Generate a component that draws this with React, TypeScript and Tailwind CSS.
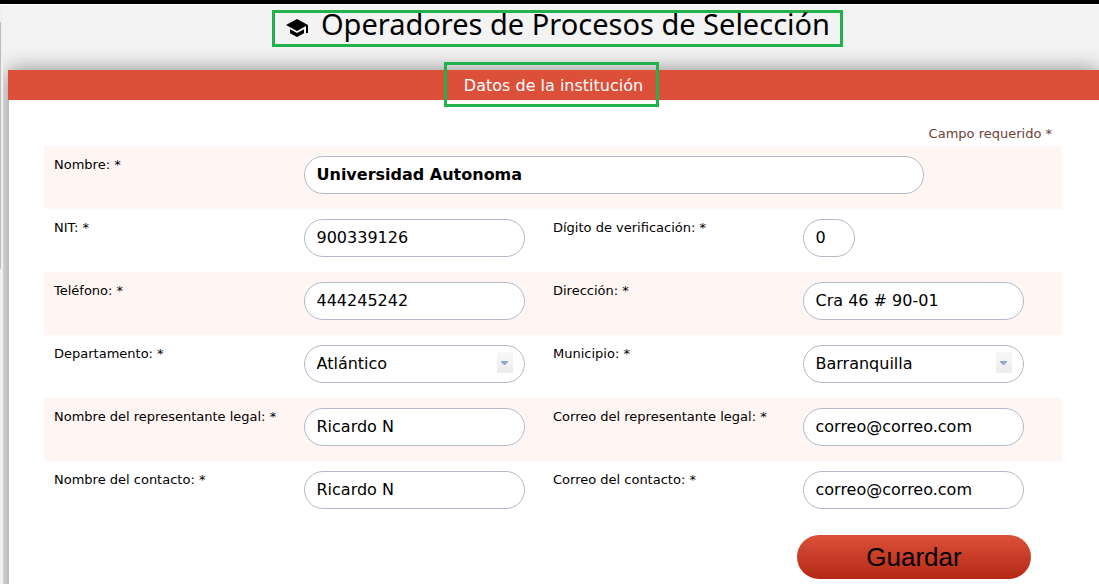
import { ReactNode } from 'react';
import { MdSchool } from 'react-icons/md';

const controlClass =
  'block h-[38px] rounded-full border border-[#b4b9c8] bg-white px-3 text-base text-black outline-none';

interface IFieldProps {
  id: string;
  label: string;
  value: string;
  options?: string[];
  size?: 'small' | 'wide';
}

function Label({ id, children }: { id: string; children: ReactNode }) {
  return (
    <label htmlFor={id} className="text-[13px] leading-[18px]">
      {children} *
    </label>
  );
}

function Field({ id, label, value, options, size }: IFieldProps) {
  if (options) {
    return (
      <>
        <Label id={id}>{label}</Label>
        <div className="relative w-[221px]">
          <select id={id} defaultValue={value} className={`${controlClass} w-full appearance-none`}>
            {options.map((option) => (
              <option key={option}>{option}</option>
            ))}
          </select>
          <span className="pointer-events-none absolute right-3 top-[7px] flex h-[21px] w-4 items-center justify-center bg-linear-to-b from-[#f8f8f8] to-[#ececec]">
            <svg width="7" height="4" viewBox="0 0 7 4" fill="#90a8d0">
              <path d="M0 0h7v1L4 4H3L0 1z" />
            </svg>
          </span>
        </div>
      </>
    );
  }

  if (size === 'wide') {
    return (
      <>
        <Label id={id}>{label}</Label>
        <div className="col-span-3">
          <input
            id={id}
            type="text"
            defaultValue={value}
            className={`${controlClass} w-[620px] max-w-full pb-0.5 font-bold`}
          />
        </div>
      </>
    );
  }

  return (
    <>
      <Label id={id}>{label}</Label>
      <input
        id={id}
        type="text"
        defaultValue={value}
        className={`${controlClass} pb-0.5 ${size === 'small' ? 'w-[52px]' : 'w-[221px]'}`}
      />
    </>
  );
}

const rows: IFieldProps[][] = [
  [{ id: 'nombre', label: 'Nombre:', value: 'Universidad Autonoma', size: 'wide' }],
  [
    { id: 'nit', label: 'NIT:', value: '900339126' },
    { id: 'digito', label: 'Dígito de verificación:', value: '0', size: 'small' },
  ],
  [
    { id: 'telefono', label: 'Teléfono:', value: '444245242' },
    { id: 'direccion', label: 'Dirección:', value: 'Cra 46 # 90-01' },
  ],
  [
    { id: 'departamento', label: 'Departamento:', value: 'Atlántico', options: ['Atlántico', 'Bolívar', 'Magdalena'] },
    { id: 'municipio', label: 'Municipio:', value: 'Barranquilla', options: ['Barranquilla', 'Soledad', 'Malambo'] },
  ],
  [
    { id: 'representante', label: 'Nombre del representante legal:', value: 'Ricardo N' },
    { id: 'correo-representante', label: 'Correo del representante legal:', value: 'correo@correo.com' },
  ],
  [
    { id: 'contacto', label: 'Nombre del contacto:', value: 'Ricardo N' },
    { id: 'correo-contacto', label: 'Correo del contacto:', value: 'correo@correo.com' },
  ],
];

export default function App() {
  return (
    <div className="flex min-h-screen flex-col border-t-4 border-black bg-[#f3f3f3] font-['DejaVu_Sans',sans-serif] text-black">
      <div className="h-px bg-white" />
      <div className="flex grow">
        <div className="w-[3px] bg-[#f0f0f0] pt-[17px]">
          <div className="h-[247px] w-px bg-[#bdbdbd]" />
        </div>

        <main className="flex grow flex-col overflow-hidden pl-[5px] pt-[5px]">
          <div className="flex justify-center pl-2">
            <h1 className="flex h-[37px] items-center gap-3 border-[3px] border-[#22b14c] px-2.5 font-['Noto_Sans',sans-serif] text-[29px] leading-none">
              <MdSchool size={24} className="mb-0.5" />
              <span className="-mt-2.5">Operadores de Procesos de Selección</span>
            </h1>
          </div>

          <form
            className="-mb-10 mt-[23px] flex grow flex-col bg-[#bbb] shadow-[0_0_20px_#888]"
            onSubmit={(e) => e.preventDefault()}
          >
            <div className="flex h-[30px] items-center justify-center bg-[#dc5039] pb-0.5 pr-1">
              <h2 className="z-10 flex h-[45px] shrink-0 items-center border-[3px] border-[#22b14c] pl-[17px] pr-[13px] pt-1 text-base text-white">
                Datos de la institución
              </h2>
            </div>

            <div className="ml-px grow bg-white pl-[35px] pr-[37px] pt-[26px]">
              <p className="mb-1 pr-2.5 text-right text-[13px] leading-4 text-[#6d4038]">Campo requerido *</p>
              {rows.map((row) => (
                <div key={row[0].id} className="grid h-[63px] grid-cols-4 px-2.5 pt-2.5 odd:bg-white even:bg-[#fff6f4]">
                  {row.map((field) => (
                    <Field key={field.id} {...field} />
                  ))}
                </div>
              ))}
              <div className="flex justify-end pr-[31px] pt-[11px]">
                <button
                  type="submit"
                  className="h-11 w-[234px] rounded-full bg-linear-to-b from-[#dc5039] to-[#b42814] font-['Liberation_Sans',sans-serif] text-[26px] leading-none"
                >
                  Guardar
                </button>
              </div>
            </div>
          </form>
        </main>
      </div>
    </div>
  );
}
